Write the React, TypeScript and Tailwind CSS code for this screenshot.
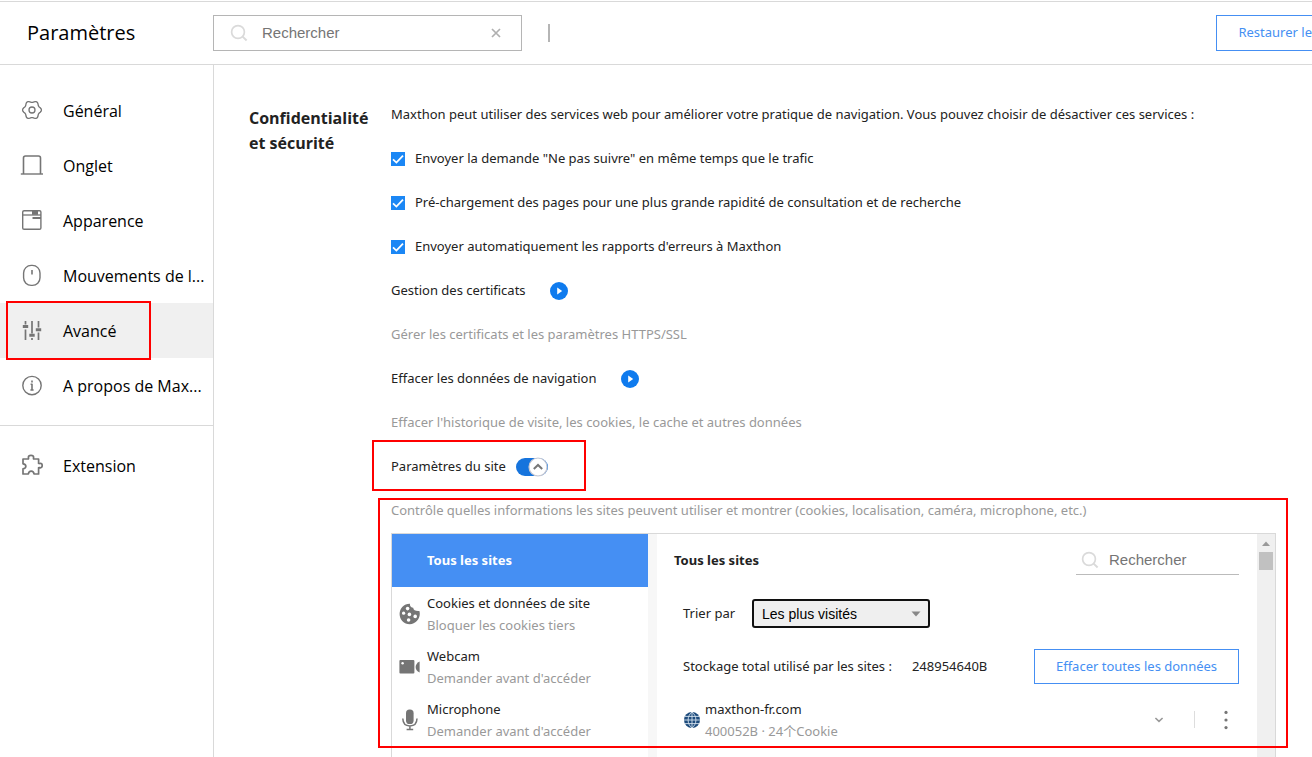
import type { ReactNode } from "react";

function SearchIcon() {
  return (
    <svg viewBox="0 0 18 18" className="size-[18px] shrink-0" fill="none" stroke="#dadada" strokeWidth="1.7" aria-hidden="true">
      <circle cx="8" cy="8" r="6.4" />
      <path d="M12.6 12.6 L16.6 16.4" strokeWidth="2" />
    </svg>
  );
}

function NavIcon({ children }: { children: ReactNode }) {
  return (
    <svg viewBox="0 0 24 24" className="size-6 shrink-0" fill="none" stroke="#757575" strokeWidth="1.3" strokeLinejoin="round" aria-hidden="true">
      {children}
    </svg>
  );
}

// six rounded teeth around (12, 11)
const gearPoints = Array.from({ length: 72 }, (_, i) => {
  const angle = (i * Math.PI) / 36;
  const r = 8.5 + 0.9 * Math.cos(6 * angle);
  return `${(12 + r * Math.cos(angle)).toFixed(2)},${(11 + r * Math.sin(angle)).toFixed(2)}`;
}).join(" ");

const navItems = [
  {
    label: "Général",
    icon: (
      <>
        <polygon points={gearPoints} />
        <circle cx="12" cy="11" r="3" />
      </>
    ),
  },
  {
    label: "Onglet",
    icon: (
      <>
        <path d="M3.5 20 V4 Q3.5 2 5.5 2 H18.5 Q20.5 2 20.5 4 V20" strokeWidth="1.6" />
        <path d="M0.8 20 H23" strokeWidth="1.4" />
      </>
    ),
  },
  {
    label: "Apparence",
    icon: (
      <>
        <rect x="2.7" y="1.7" width="18.2" height="18.6" rx="1.4" strokeWidth="1.4" />
        <path d="M2.7 6 H21" />
        <path d="M12 3.8 H18" strokeWidth="4" />
        <path d="M12.5 9 H21" strokeWidth="2" />
      </>
    ),
  },
  {
    label: "Mouvements de l...",
    icon: (
      <>
        <rect x="3.6" y="1.4" width="16.4" height="20" rx="7.6" strokeWidth="1.4" />
        <path d="M12 6 V10.5" strokeWidth="1.6" />
      </>
    ),
  },
  {
    label: "Avancé",
    active: true,
    icon: (
      <>
        <path d="M5.5 2 V5.5 M5.5 10.5 V21 M12 2 V14.5 M12 19 V21 M18.5 2 V8.5 M18.5 13.5 V21" strokeWidth="1.7" />
        <path d="M2.8 7.5 H8.2 M9.3 16.3 H14.7 M15.8 10.7 H21.2" strokeWidth="3" />
      </>
    ),
  },
  {
    label: "A propos de Max...",
    icon: (
      <>
        <circle cx="12" cy="11.6" r="9.2" strokeWidth="1.4" />
        <path d="M12 6.6 V8.6 M10.6 10.3 H12 V15.6 M10.4 16 H13.6" strokeWidth="1.6" />
      </>
    ),
  },
];

const options = [
  { id: "dnt", label: "Envoyer la demande \"Ne pas suivre\" en même temps que le trafic" },
  { id: "preload", label: "Pré-chargement des pages pour une plus grande rapidité de consultation et de recherche" },
  { id: "reports", label: "Envoyer automatiquement les rapports d'erreurs à Maxthon" },
];

const permissions = [
  {
    title: "Cookies et données de site",
    detail: "Bloquer les cookies tiers",
    icon: (
      <>
        <path fill="#757575" d="M11 .8 C10.6 3 12 4.8 14.2 4.8 C14.4 7.2 16.8 8.4 20.4 8 C22.3 14.5 17.2 21.2 10.8 21.2 C5 21.2 .6 16.8 .6 11 C.6 5.2 5.2 .6 11 .8 Z" />
        <g fill="#fff">
          <circle cx="8.6" cy="5.6" r="1.8" />
          <circle cx="4.6" cy="10.2" r="1.6" />
          <circle cx="10.4" cy="11.4" r="1.8" />
          <circle cx="16.2" cy="13.4" r="1.8" />
          <circle cx="9.6" cy="17" r="1.8" />
        </g>
      </>
    ),
  },
  {
    title: "Webcam",
    detail: "Demander avant d'accéder",
    icon: (
      <>
        <rect x="0.4" y="4" width="15" height="13.6" rx="1" fill="#757575" />
        <path d="M20.6 5.4 V16.6 Q16.6 14.6 16.6 11 Q16.6 7.4 20.6 5.4 Z" fill="#757575" />
        <circle cx="3.6" cy="7.2" r="1.2" fill="#fff" />
      </>
    ),
  },
  {
    title: "Microphone",
    detail: "Demander avant d'accéder",
    icon: (
      <>
        <rect x="7" y="0.6" width="7.6" height="14.4" rx="3.6" fill="#757575" />
        <path d="M3.8 9.6 Q4 17 10.9 17 Q17.8 17 18 9.6 M10.9 17 V20.4 M7.6 20.6 H14.2" fill="none" stroke="#757575" strokeWidth="1.5" />
      </>
    ),
  },
];

function PlayButton({ label }: { label: string }) {
  return (
    <button type="button" aria-label={label} className="flex size-[18px] items-center justify-center rounded-full bg-[#0f7bee]">
      <svg viewBox="0 0 18 18" className="size-[18px]" aria-hidden="true">
        <path d="M7.2 5.6 L12.2 9 L7.2 12.4 Z" fill="#fff" />
      </svg>
    </button>
  );
}

function Sidebar() {
  return (
    <nav className="w-[214px] shrink-0 border-r border-[#d9d9d9] pt-[18px] font-['Open_Sans',sans-serif] text-base text-black">
      {navItems.map((item) => (
        <div key={item.label} className={item.active ? "relative bg-[#f0f0f0]" : ""}>
          <a href="#" className="flex h-[55px] items-center gap-[19px] pl-5 whitespace-nowrap">
            <NavIcon>{item.icon}</NavIcon>
            {item.label}
          </a>
          {item.active && (
            <div className="pointer-events-none absolute -top-[2px] left-[6px] h-[59px] w-[145px] border-2 border-[#f00]" />
          )}
        </div>
      ))}
      <div className="mt-3 border-t border-[#d9d9d9] pt-3">
        <a href="#" className="flex h-[55px] items-center gap-[19px] pl-5">
          <NavIcon>
            <path
              strokeWidth="1.7"
              d="M3 5 H8.4 C8.8 4.4 8.4 3.8 8.4 3.2 C8.4 .8 13.6 .8 13.6 3.2 C13.6 3.8 13.2 4.4 13.6 5 H18.6 V9.4 C19.2 9.8 19.6 9.4 20.4 9.4 C22.8 9.4 22.8 13.8 20.4 13.8 C19.6 13.8 19.2 13.2 18.6 13.6 V20 H14 C13.6 16.2 8.8 16.2 8.4 20 H3 V14.8 C6.8 14.4 6.8 10.2 3 9.8 Z"
            />
          </NavIcon>
          Extension
        </a>
      </div>
    </nav>
  );
}

function PermissionList() {
  return (
    <ul className="w-64 shrink-0">
      <li className="flex h-[53px] items-center bg-[#458ff3] pl-[35px] font-bold text-white">Tous les sites</li>
      {permissions.map((p) => (
        <li key={p.title} className="flex h-[53px] items-center gap-[7px] pl-[7px] leading-[22px]">
          <svg viewBox="0 0 21 22" className="h-[22px] w-[21px] shrink-0" aria-hidden="true">
            {p.icon}
          </svg>
          <div>
            <p>{p.title}</p>
            <p className="text-[#999]">{p.detail}</p>
          </div>
        </li>
      ))}
    </ul>
  );
}

function SiteDetails() {
  return (
    <div className="min-w-0 flex-1 pr-[18px] pl-[17px]">
      <div className="flex h-[53px] items-center justify-between">
        <h3 className="font-bold">Tous les sites</h3>
        <label className="flex h-[29px] w-[163px] items-center gap-[10px] border-b border-[#bbb] pl-[5px]">
          <SearchIcon />
          <input
            type="search"
            aria-label="Rechercher un site"
            placeholder="Rechercher"
            className="w-full min-w-0 font-['Liberation_Sans',sans-serif] text-[15px] outline-none placeholder:text-[#757575]"
          />
        </label>
      </div>

      <div className="flex h-[53px] items-center gap-[17px] pl-[9px]">
        <label htmlFor="sort">Trier par</label>
        <div className="relative">
          <select
            id="sort"
            className="block h-[29px] w-[178px] appearance-none rounded-[3px] border-2 border-[#101010] bg-[#efefef] pl-2 font-['Liberation_Sans',sans-serif] text-sm text-black"
          >
            <option>Les plus visités</option>
          </select>
          <svg viewBox="0 0 10 6" className="pointer-events-none absolute top-[12px] right-[9px] h-[6px] w-[10px]" aria-hidden="true">
            <path d="M0.5 0.5 H9.5 L5 5.5 Z" fill="#888" />
          </svg>
        </div>
      </div>

      <div className="flex h-[53px] items-center pl-[9px]">
        <span>Stockage total utilisé par les sites :</span>
        <span className="ml-5">248954640B</span>
        <button type="button" className="ml-auto h-[35px] w-[205px] border border-[#458ff3] text-[#458ff3]">
          Effacer toutes les données
        </button>
      </div>

      <div className="flex h-[53px] items-center pl-[9px] leading-[22px]">
        <svg viewBox="0 0 18 18" className="size-[18px] shrink-0" aria-hidden="true">
          <circle cx="9" cy="9" r="8" fill="#1d4b7c" />
          <path
            d="M9 1 V17 M1 9 H17 M2 5.4 H16 M2 12.6 H16 M9 1 C3.8 5 3.8 13 9 17 M9 1 C14.2 5 14.2 13 9 17"
            fill="none"
            stroke="#d5e2ee"
            strokeWidth="0.9"
          />
        </svg>
        <div className="ml-1">
          <p>maxthon-fr.com</p>
          <p className="text-[#999]">400052B · 24个Cookie</p>
        </div>
        <button type="button" aria-label="Afficher les détails" className="ml-auto p-[6px]">
          <svg viewBox="0 0 10 8" className="h-2 w-[10px]" fill="none" stroke="#999" strokeWidth="1.6" aria-hidden="true">
            <path d="M1.4 2 L5 5.4 L8.6 2" />
          </svg>
        </button>
        <div className="mr-[23px] ml-6 h-[17px] w-px bg-[#ddd]" />
        <button type="button" aria-label="Plus d'options" className="pr-[5px]">
          <svg viewBox="0 0 16 20" className="h-5 w-4" fill="#757575" aria-hidden="true">
            <circle cx="8" cy="2.4" r="1.6" />
            <circle cx="8" cy="10" r="1.6" />
            <circle cx="8" cy="17.6" r="1.6" />
          </svg>
        </button>
      </div>
    </div>
  );
}

export default function App() {
  return (
    <div className="flex h-screen flex-col overflow-hidden bg-white pt-px font-['Noto_Sans','Noto_Sans_CJK_SC',sans-serif] text-[13px] text-[#222]">
      <header className="flex h-16 shrink-0 items-center border-y border-[#d9d9d9]">
        <h1 className="w-[213px] shrink-0 pl-[27px] font-['Open_Sans',sans-serif] text-xl text-black">Paramètres</h1>
        <label className="flex h-9 w-[309px] items-center border border-[#b5b5b5] pr-5 pl-4">
          <SearchIcon />
          <input
            type="text"
            aria-label="Rechercher dans les paramètres"
            placeholder="Rechercher"
            className="ml-[14px] w-full min-w-0 font-['Liberation_Sans',sans-serif] text-[15px] outline-none placeholder:text-[#757575]"
          />
          <button type="button" aria-label="Effacer la recherche">
            <svg viewBox="0 0 10 10" className="size-[10px]" stroke="#b0b0b0" strokeWidth="1.7" aria-hidden="true">
              <path d="M1 1 L9 9 M9 1 L1 9" />
            </svg>
          </button>
        </label>
        <div className="ml-[26px] h-[18px] w-[2px] bg-[#b5b5b5]" />
        <button type="button" className="ml-auto h-9 border border-r-0 border-[#458ff3] pl-[21px] whitespace-nowrap text-[#458ff3]">
          Restaurer le
        </button>
      </header>

      <div className="flex min-h-0 flex-1">
        <Sidebar />

        <main className="flex min-w-0 flex-1 pt-[27px] pr-9 pl-[35px]">
          <h2 className="w-[142px] shrink-0 pt-[14px] font-['Open_Sans',sans-serif] text-base leading-[25px] font-bold">
            Confidentialité
            <br />
            et sécurité
          </h2>

          <section className="flex min-w-0 flex-1 flex-col">
            <p className="flex h-[45px] shrink-0 items-center whitespace-nowrap">
              Maxthon peut utiliser des services web pour améliorer votre pratique de navigation. Vous pouvez choisir de désactiver ces services :
            </p>

            {options.map((o) => (
              <div key={o.id} className="flex h-11 shrink-0 items-center gap-[10px]">
                <span className="relative size-[14px]">
                  <input id={o.id} type="checkbox" defaultChecked className="peer block size-[14px] appearance-none border border-[#1b87f5] checked:bg-[#1b87f5]" />
                  <svg viewBox="0 0 14 14" className="pointer-events-none absolute inset-0 hidden size-[14px] peer-checked:block" fill="none" stroke="#fff" strokeWidth="1.8" aria-hidden="true">
                    <path d="M2 7.4 L5.4 10.6 L12 3.6" />
                  </svg>
                </span>
                <label htmlFor={o.id}>{o.label}</label>
              </div>
            ))}

            <div className="flex h-11 shrink-0 items-center gap-6">
              Gestion des certificats
              <PlayButton label="Gestion des certificats" />
            </div>
            <p className="flex h-11 shrink-0 items-center text-[#999]">Gérer les certificats et les paramètres HTTPS/SSL</p>

            <div className="flex h-11 shrink-0 items-center gap-6">
              Effacer les données de navigation
              <PlayButton label="Effacer les données de navigation" />
            </div>
            <p className="flex h-11 shrink-0 items-center text-[#999]">Effacer l'historique de visite, les cookies, le cache et autres données</p>

            <div className="relative flex h-11 shrink-0 items-center gap-[10px]">
              Paramètres du site
              <button type="button" aria-label="Paramètres du site" aria-expanded="true" className="flex h-[18px] w-8 justify-end rounded-full bg-[#1674dd]">
                <svg viewBox="0 0 20 20" className="-my-px size-5" aria-hidden="true">
                  <circle cx="10" cy="10" r="9" fill="#fff" stroke="#c9c9d2" strokeWidth="1.2" />
                  <path d="M5.8 12 L10 8 L14.2 12" fill="none" stroke="#777" strokeWidth="2" />
                </svg>
              </button>
              <div className="pointer-events-none absolute -top-[5px] -left-[19px] h-[51px] w-[214px] border-2 border-[#f00]" />
            </div>

            <div className="relative flex min-h-0 flex-1 flex-col">
              <p className="flex h-11 shrink-0 items-center text-[#999]">
                Contrôle quelles informations les sites peuvent utiliser et montrer (cookies, localisation, caméra, microphone, etc.)
              </p>
              <div className="flex min-h-0 flex-1 overflow-hidden border border-b-0 border-[#d9d9d9]">
                <PermissionList />
                <div className="w-[9px] shrink-0 bg-[#f7f7f7]" />
                <SiteDetails />
                <div className="flex w-[18px] shrink-0 flex-col items-center bg-[#f0f0f0]">
                  <svg viewBox="0 0 18 18" className="size-[18px]" aria-hidden="true">
                    <path d="M5 12 L9 7.6 L13 12 Z" fill="#999" />
                  </svg>
                  <div className="h-[18px] w-[14px] bg-[#c1c1c1]" />
                </div>
              </div>
              <div className="pointer-events-none absolute top-[9px] -right-3 -left-[13px] h-[250px] border-2 border-[#f00]" />
            </div>
          </section>
        </main>
      </div>
    </div>
  );
}
